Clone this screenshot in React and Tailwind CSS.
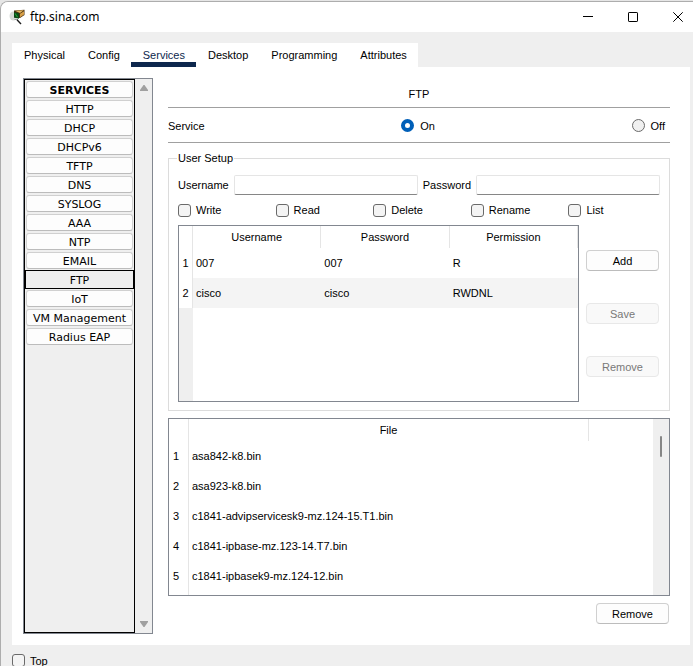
import { useState } from "react";

const TABS = ["Physical", "Config", "Services", "Desktop", "Programming", "Attributes"];

const SERVICES = [
  "HTTP",
  "DHCP",
  "DHCPv6",
  "TFTP",
  "DNS",
  "SYSLOG",
  "AAA",
  "NTP",
  "EMAIL",
  "FTP",
  "IoT",
  "VM Management",
  "Radius EAP",
];

const PERMISSIONS = ["Write", "Read", "Delete", "Rename", "List"];

const USERS = [
  { username: "007", password: "007", permission: "R" },
  { username: "cisco", password: "cisco", permission: "RWDNL" },
];

const FILES = [
  "asa842-k8.bin",
  "asa923-k8.bin",
  "c1841-advipservicesk9-mz.124-15.T1.bin",
  "c1841-ipbase-mz.123-14.T7.bin",
  "c1841-ipbasek9-mz.124-12.bin",
];

function AppIcon() {
  return (
    <svg className="h-4 w-4" viewBox="0 0 16 16" aria-hidden="true">
      <ellipse cx="4.5" cy="7" rx="4" ry="4.5" fill="#d6dad6" />
      <path d="M5 1.5 L15.5 0.8 L15.5 6 L11 9 L5 8.5 Z" fill="#4a3212" />
      <path d="M6 1.8 L14.8 1.2 L11 4 Z" fill="#e8b860" />
      <path d="M11 4.8 L15 2.2 L15 5.6 L11 8.2 Z" fill="#d8a048" />
      <path d="M5 3.2 L10 4.2 L10 9.8 L5 8.6 Z" fill="#0a4a14" />
      <path d="M6 4.5 L8.5 8" stroke="#1f9a34" strokeWidth="1.2" />
      <path d="M5.5 10.5 H9" stroke="#9a9a9a" strokeWidth="1" />
      <path d="M8 10.8 L12 15" stroke="#1c1c1c" strokeWidth="1.4" />
    </svg>
  );
}

function TitleBar() {
  return (
    <header className="flex h-[30px] items-center bg-white pl-2 pr-[10px] text-black">
      <AppIcon />
      <h1 className="ml-[5px] flex-1 font-['Noto_Sans',sans-serif] text-[12px] leading-4">
        ftp.sina.com
      </h1>
      <div className="flex items-center gap-[35px]">
        <button type="button" aria-label="Minimize">
          <svg className="block h-[10px] w-[10px]" viewBox="0 0 10 10">
            <path d="M0 4.5 H10" stroke="currentColor" />
          </svg>
        </button>
        <button type="button" aria-label="Maximize">
          <svg className="block h-[10px] w-[10px]" viewBox="0 0 10 10">
            <rect x="0.5" y="0.5" width="9" height="9" rx="0.6" fill="none" stroke="currentColor" />
          </svg>
        </button>
        <button type="button" aria-label="Close">
          <svg className="block h-[10px] w-[10px]" viewBox="0 0 10 10">
            <path d="M0.3 0.3 L9.7 9.7 M9.7 0.3 L0.3 9.7" stroke="currentColor" />
          </svg>
        </button>
      </div>
    </header>
  );
}

function PushButton({ children, disabled = false }) {
  return (
    <button
      type="button"
      disabled={disabled}
      className="h-[21px] w-[73px] shrink-0 rounded-[4px] border border-[#d0d0d0] border-b-[#bcbcbc] bg-[#fdfdfd] disabled:border-[#e8e8e8] disabled:bg-[#f9f9f9] disabled:text-[#787878]"
    >
      {children}
    </button>
  );
}

function CheckBox({ label }) {
  return (
    <label className="flex items-center gap-[5px]">
      <input
        type="checkbox"
        className="h-[13px] w-[13px] appearance-none rounded-[3px] border border-[#6a6a6a] bg-[#f4f4f4] checked:bg-[#005fb8]"
      />
      <span className="pt-px">{label}</span>
    </label>
  );
}

function Radio({ label, checked, onChange }) {
  return (
    <label className="flex items-center gap-[6px]">
      <input
        type="radio"
        name="service"
        checked={checked}
        onChange={onChange}
        className="h-[13px] w-[13px] appearance-none rounded-full border border-[#6a6a6a] bg-[#f0f0f0] checked:border-4 checked:border-[#005fb8] checked:bg-white"
      />
      <span className="pt-px">{label}</span>
    </label>
  );
}

function ServiceList({ active, onSelect }) {
  return (
    <aside className="flex w-[130px] shrink-0 border border-[#828790] bg-[#efefef]">
      <ul className="w-[111px] border border-black font-['DejaVu_Sans',sans-serif] leading-[13px]">
        <li className="h-[19px] p-px">
          <div className="h-full rounded-[3px] border border-[#d0d0d0] border-b-[#bcbcbc] bg-[#fdfdfd] pt-[2px] text-center font-bold">
            SERVICES
          </div>
        </li>
        {SERVICES.map((name) => (
          <li key={name} className={name === active ? "h-[19px]" : "h-[19px] p-px"}>
            <button
              type="button"
              onClick={() => onSelect(name)}
              className={
                name === active
                  ? "block h-full w-full border border-black bg-[#efefef] pt-[2px]"
                  : "block h-full w-full rounded-[3px] border border-[#d0d0d0] border-b-[#bcbcbc] bg-[#fdfdfd] pt-[2px]"
              }
            >
              {name}
            </button>
          </li>
        ))}
      </ul>
      {/* Scroll arrows */}
      <div className="flex flex-1 flex-col items-center justify-between py-[5px]">
        <svg className="h-2 w-2" viewBox="0 0 8 8" aria-hidden="true">
          <path d="M3.5 1 H4.5 L8 6 V7 H0 V6 Z" fill="#a0a0a0" />
        </svg>
        <svg className="h-2 w-2" viewBox="0 0 8 8" aria-hidden="true">
          <path d="M0 1 H8 V2 L4.5 7 H3.5 L0 2 Z" fill="#a0a0a0" />
        </svg>
      </div>
    </aside>
  );
}

function UserTable() {
  return (
    <div className="flex h-[177px] flex-1 flex-col border border-[#828790]">
      <table className="w-full table-fixed border-separate border-spacing-0">
        <thead>
          <tr className="h-[22px]">
            <th className="w-[14px] border-r border-[#e5e5e5] p-0" />
            <th className="border-r border-[#e5e5e5] p-0 font-normal">Username</th>
            <th className="border-r border-[#e5e5e5] p-0 font-normal">Password</th>
            <th className="border-r border-[#e5e5e5] p-0 font-normal">Permission</th>
          </tr>
        </thead>
        <tbody>
          {USERS.map((user, i) => (
            <tr key={user.username} className="h-[30px] even:bg-[#f4f4f4]">
              <th className="border-r border-[#e5e5e5] bg-white p-0 font-normal">{i + 1}</th>
              <td className="p-0 pl-[3px]">{user.username}</td>
              <td className="p-0 pl-[3px]">{user.password}</td>
              <td className="p-0 pl-[3px]">{user.permission}</td>
            </tr>
          ))}
        </tbody>
      </table>
      <div className="w-[14px] flex-1 bg-[#efefef]" />
    </div>
  );
}

function UserSetup() {
  return (
    <fieldset className="mt-2 border border-[#dcdcdc] px-[9px] pb-2">
      <legend className="-ml-px px-px leading-[14px]">User Setup</legend>
      <div className="mt-[10px] flex items-center gap-[5px]">
        <label htmlFor="username">Username</label>
        <input
          id="username"
          type="text"
          className="h-5 min-w-0 flex-1 rounded-[2px] border border-[#e5e5e5] border-b-[#868686] bg-white px-1 outline-none"
        />
        <label htmlFor="password">Password</label>
        <input
          id="password"
          type="text"
          className="h-5 min-w-0 flex-1 rounded-[2px] border border-[#e5e5e5] border-b-[#868686] bg-white px-1 outline-none"
        />
      </div>
      <div className="mt-2 grid grid-cols-5 gap-[6px] leading-[13px]">
        {PERMISSIONS.map((name) => (
          <CheckBox key={name} label={name} />
        ))}
      </div>
      <div className="mt-2 flex gap-[7px] pr-px">
        <UserTable />
        <div className="flex flex-col gap-8 pt-[25px]">
          <PushButton>Add</PushButton>
          <PushButton disabled>Save</PushButton>
          <PushButton disabled>Remove</PushButton>
        </div>
      </div>
    </fieldset>
  );
}

function FileTable() {
  return (
    <div className="mt-[7px] flex h-[178px] border border-[#828790]">
      <div className="flex flex-1 flex-col">
        <table className="w-full table-fixed border-separate border-spacing-0">
          <thead>
            <tr className="h-[22px]">
              <th className="w-5 border-r border-[#e5e5e5] p-0" />
              <th className="border-r border-[#e5e5e5] p-0 font-normal">File</th>
              <td className="w-16 p-0" />
            </tr>
          </thead>
          <tbody>
            {FILES.map((file, i) => (
              <tr key={file} className="h-[30px]">
                <th className="border-r border-[#e5e5e5] p-0 pr-[5px] font-normal">{i + 1}</th>
                <td colSpan={2} className="p-0 pl-[3px]">
                  {file}
                </td>
              </tr>
            ))}
          </tbody>
        </table>
        <div className="w-5 flex-1 border-r border-[#e5e5e5]" />
      </div>
      <div className="flex w-4 justify-center bg-[#efefef] pt-[17px]">
        <div className="h-[21px] w-[2px] rounded-[1px] bg-[#868686]" />
      </div>
    </div>
  );
}

export default function App() {
  const [tab, setTab] = useState("Services");
  const [service, setService] = useState("FTP");
  const [enabled, setEnabled] = useState(true);

  return (
    <div className="h-screen overflow-hidden bg-[#e6e6e6] pt-px font-['Liberation_Sans',Arial,sans-serif] text-[11px] leading-[14px] text-black">
      <div className="min-h-screen overflow-hidden rounded-tl-lg border-l border-t border-[#adadad] bg-[#efefef]">
        <TitleBar />

        <nav className="ml-[11px] mt-[11px] flex h-6 w-fit bg-white">
          {TABS.map((name) => (
            <button
              key={name}
              type="button"
              onClick={() => setTab(name)}
              className={
                name === tab
                  ? "border-b-[5px] border-[#0d274d] pl-3 pr-[11px] pt-[5px] text-[#0d274d]"
                  : "border-b-[5px] border-transparent pl-3 pr-[11px] pt-[5px]"
              }
            >
              {name}
            </button>
          ))}
        </nav>

        <main className="ml-[11px] mr-[3px] flex gap-[15px] bg-white py-[11px] pl-[11px] pr-5">
          <ServiceList active={service} onSelect={setService} />

          <section className="min-w-0 flex-1 pb-[10px]">
            <h2 className="border-b border-[#a0a0a0] pb-[6px] pt-[9px] text-center">{service}</h2>
            <div className="flex h-[35px] items-center justify-between border-b border-[#a0a0a0] pr-[5px]">
              <span className="pt-px">Service</span>
              <Radio label="On" checked={enabled} onChange={() => setEnabled(true)} />
              <Radio label="Off" checked={!enabled} onChange={() => setEnabled(false)} />
            </div>
            <UserSetup />
            <FileTable />
            <div className="mt-[7px] flex justify-end pr-px">
              <PushButton>Remove</PushButton>
            </div>
          </section>
        </main>

        <footer className="ml-[11px] mt-2 flex">
          <CheckBox label="Top" />
        </footer>
      </div>
    </div>
  );
}
